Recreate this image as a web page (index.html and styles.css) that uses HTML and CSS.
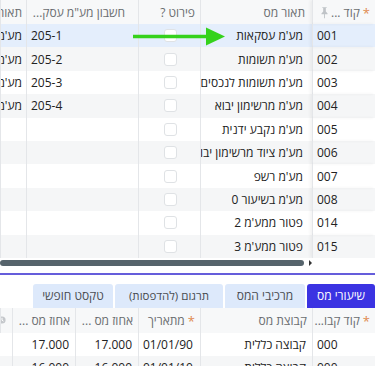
FILE: index.html
```html
<!DOCTYPE html>
<html lang="he" dir="rtl">
<head>
<meta charset="utf-8">
<link rel="stylesheet" href="styles.css">
</head>
<body>
<div class="app">
  <div class="grid top">
    <div class="row head">
      <div class="cell c1 hcell"><span class="star">*</span><span class="label">קוד ...</span>
        <svg class="pin" width="8" height="13" viewBox="0 0 8 13"><path d="M1.5 0.5h5v1h-1v4l2 2v1h-3v4.5h-1v-4.5h-3v-1l2-2v-4h-1z" fill="#bfc3c7"/></svg>
      </div>
      <div class="cell c2 hcell"><span class="label">תאור מס</span></div>
      <div class="cell c3 hcell"><span class="label">פירוט ?</span></div>
      <div class="cell c4 hcell"><svg class="info" width="8" height="8" viewBox="0 0 8 8"><circle cx="4" cy="4" r="3.6" fill="#c4c7cb"/><path d="M4 1.8v2.4l1.5 1" stroke="#fff" stroke-width="1" fill="none"/></svg><span class="label">חשבון מע"מ עסק...</span></div>
      <div class="cell c5 hcell"><span class="label">תאור מס</span></div>
    </div>
    <div class="row sel"><div class="cell c1 ltr">001</div><div class="cell c2 rt">מע'מ עסקאות</div><div class="cell c3 ctr"><span class="cb"></span></div><div class="cell c4 ltr">205-1</div><div class="cell c5 rt">מע'מ עסקאות</div></div>
    <div class="row alt"><div class="cell c1 ltr">002</div><div class="cell c2 rt">מע'מ תשומות</div><div class="cell c3 ctr"><span class="cb"></span></div><div class="cell c4 ltr">205-2</div><div class="cell c5 rt">מע'מ תשומות</div></div>
    <div class="row"><div class="cell c1 ltr">003</div><div class="cell c2 rt">מע'מ תשומות לנכסים</div><div class="cell c3 ctr"><span class="cb"></span></div><div class="cell c4 ltr">205-3</div><div class="cell c5 rt">מע'מ תשומות</div></div>
    <div class="row alt"><div class="cell c1 ltr">004</div><div class="cell c2 rt">מע'מ מרשימון יבוא</div><div class="cell c3 ctr"><span class="cb"></span></div><div class="cell c4 ltr">205-4</div><div class="cell c5 rt">מע'מ מרשימון</div></div>
    <div class="row"><div class="cell c1 ltr">005</div><div class="cell c2 rt">מע'מ נקבע ידנית</div><div class="cell c3 ctr"><span class="cb"></span></div><div class="cell c4 ltr"></div><div class="cell c5 rt"></div></div>
    <div class="row alt"><div class="cell c1 ltr">006</div><div class="cell c2 rt">מע'מ ציוד מרשימון יבוא</div><div class="cell c3 ctr"><span class="cb"></span></div><div class="cell c4 ltr"></div><div class="cell c5 rt"></div></div>
    <div class="row"><div class="cell c1 ltr">007</div><div class="cell c2 rt">מע'מ רשפ</div><div class="cell c3 ctr"><span class="cb"></span></div><div class="cell c4 ltr"></div><div class="cell c5 rt"></div></div>
    <div class="row alt"><div class="cell c1 ltr">008</div><div class="cell c2 rt">מע'מ בשיעור 0</div><div class="cell c3 ctr"><span class="cb"></span></div><div class="cell c4 ltr"></div><div class="cell c5 rt"></div></div>
    <div class="row"><div class="cell c1 ltr">014</div><div class="cell c2 rt">פטור ממע'מ 2</div><div class="cell c3 ctr"><span class="cb"></span></div><div class="cell c4 ltr"></div><div class="cell c5 rt"></div></div>
    <div class="row alt"><div class="cell c1 ltr">015</div><div class="cell c2 rt">פטור ממע'מ 3</div><div class="cell c3 ctr"><span class="cb"></span></div><div class="cell c4 ltr"></div><div class="cell c5 rt"></div></div>
  </div>
  <div class="hscroll"><span class="sarrow"></span><div class="thumb"></div></div>
  <div class="divider"></div>
  <div class="tabs">
    <div class="tab active t-rates">שיעורי מס</div>
    <div class="tab t-parts">מרכיבי המס</div>
    <div class="tab t-trans">תרגום (להדפסות)</div>
    <div class="tab t-free">טקסט חופשי</div>
  </div>
  <div class="grid bottom">
    <div class="row head">
      <div class="cell b1 hcell"><span class="star">*</span><span class="label">קוד קבו...</span></div>
      <div class="cell b2 hcell"><span class="label">קבוצת מס</span></div>
      <div class="cell b3 hcell"><span class="star">*</span><span class="label">מתאריך</span></div>
      <div class="cell b4 hcell"><span class="label">אחוז מס ...</span></div>
      <div class="cell b5 hcell"><span class="label">אחוז מס ...</span></div>
      <div class="cell b6 hcell"><svg class="info" width="8" height="8" viewBox="0 0 8 8"><circle cx="4" cy="4" r="3.6" fill="#c4c7cb"/><path d="M4 1.8v2.4l1.5 1" stroke="#fff" stroke-width="1" fill="none"/></svg></div>
    </div>
    <div class="row"><div class="cell b1 ltr">000</div><div class="cell b2 rt">קבוצה כללית</div><div class="cell b3 ltr">01/01/90</div><div class="cell b4 rt">17.000</div><div class="cell b5 rt">17.000</div><div class="cell b6"></div></div>
    <div class="row alt"><div class="cell b1 ltr">000</div><div class="cell b2 rt">קבוצה כללית</div><div class="cell b3 ltr">01/01/10</div><div class="cell b4 rt">16.000</div><div class="cell b5 rt">16.000</div><div class="cell b6"></div></div>
  </div>
  <svg class="green-arrow" width="100" height="24" viewBox="0 0 100 24">
    <line x1="3" y1="11.5" x2="78" y2="11.5" stroke="#35d21c" stroke-width="3.5"/>
    <polygon points="76,2.5 95,11.5 76,20.5" fill="#35d21c"/>
  </svg>
</div>
</body>
</html>
```
FILE: styles.css
```css
* { box-sizing: border-box; }
html, body { margin: 0; padding: 0; background: #fff; }
body {
  direction: rtl;
  font-family: "Open Sans", "Liberation Sans", Arial, sans-serif;
  font-size: 12px;
  color: #222;
  width: 375px;
  height: 366px;
  overflow: hidden;
}
.app { position: relative; width: 375px; height: 366px; overflow: hidden; }

.grid { width: 375px; overflow: hidden; }
.row { display: grid; height: 23.4px; background: #fff; }
.row.alt { background: #f5f6f7; }
.row.sel { background: #e4eefc; }
.row.head { height: 24px; background: #f7f8f9; color: #6a6d70; }

.top .row { grid-template-columns: 63px 112px 62px 112px 26px; }
.bottom .row { grid-template-columns: 63px 112px 62px 63px 63px 12px; }
.bottom .row.head { height: 25px; }

.cell {
  border-left: 1px solid #e4e6e9;
  display: flex;
  align-items: center;
  white-space: nowrap;
  overflow: hidden;
  padding: 0 6px;
}
.top .c1 { box-shadow: -2px 0 3px rgba(0,0,0,0.05); position: relative; z-index: 1; }
.top .c2 { padding-right: 9px; }
.top .c5 { padding-right: 4px; }
.ltr { direction: ltr; justify-content: flex-start; padding-left: 4px; }
.rt { justify-content: flex-start; }
.ctr { justify-content: center; }

.hcell { gap: 3px; padding-right: 5px; }
.top .c1.hcell { padding-right: 5px; }
.top .c1.hcell .pin { margin-right: auto; margin-left: 2px; }
.top .c2.hcell { padding-right: 7px; }
.top .c4.hcell { padding-right: 8px; gap: 5px; }
.bottom .b6.hcell { padding: 0; justify-content: flex-end; }
.bottom .b6 .info { margin-left: -3px; }
.star { color: #e0894f; font-size: 13px; line-height: 1; margin-top: 3px; }

.cb {
  width: 13px; height: 13px;
  border: 1.5px solid #dfe2e5;
  border-radius: 3px;
  background: #fff;
  margin-left: 2px;
}

.hscroll {
  position: relative;
  height: 15px;
  padding-top: 1px;
  direction: ltr;
  display: flex;
}
.thumb {
  width: 304px; height: 6px;
  background: #56646c;
  border-radius: 3px;
  margin-top: 1px;
}
.sarrow {
  order: 2;
  width: 0; height: 0;
  border-top: 3px solid transparent;
  border-bottom: 3px solid transparent;
  border-left: 3px solid #333;
  margin: 1px 0 0 5px;
}
.divider { height: 2px; background: #655ddb; }

.tabs {
  display: flex;
  gap: 2px;
  padding-top: 9px;
  height: 33px;
}
.tab {
  height: 24px;
  display: flex;
  align-items: center;
  justify-content: center;
  background: #dde9fb;
  color: #4a4d52;
  border-radius: 3px 3px 0 0;
  white-space: nowrap;
}
.t-rates { width: 68px; }
.t-parts { width: 80px; }
.t-trans { width: 108px; font-size: 11.5px; }
.t-free { width: 80px; }
.tab.active { background: #3b33e2; color: #fff; }

.green-arrow { position: absolute; left: 130px; top: 25px; }
```
